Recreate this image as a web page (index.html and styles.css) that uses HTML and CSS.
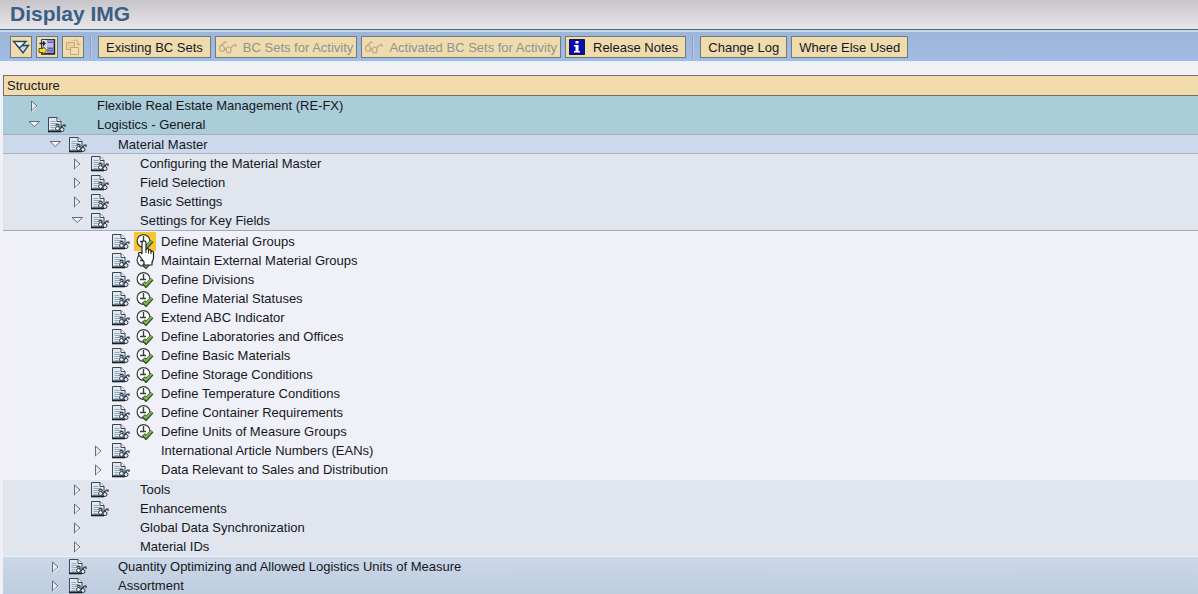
FILE: index.html
```
<!DOCTYPE html>
<html lang="en">
<head>
    <meta charset="UTF-8">
    <meta name="viewport" content="width=device-width, initial-scale=1.0">
    <title>Display IMG</title>
    <link rel="stylesheet" href="styles.css">
</head>
<body>
    <!-- Shared icons -->
    <svg class="sprite" aria-hidden="true">
        <symbol id="closed" viewBox="0 0 16 16">
            <path d="M5.5 3v10l5.5-5z" fill="#e9edf3" stroke="#646b75"/>
            <path d="M6 13.5l5.5-5" stroke="#fff" fill="none"/>
        </symbol>
        <symbol id="open" viewBox="0 0 16 16">
            <path d="M3 4.500h10.500l-5.250 5z" fill="#f3f6fa" stroke="#646b75"/>
        </symbol>
        <symbol id="doc" viewBox="0 0 18 16">
            <path d="M.5.500h8.500l4 4v9.500H.5z" fill="#dfe8f1" stroke="#3a4753"/>
            <path d="M0 14.500h13" stroke="#15202b" stroke-width="1.600"/>
            <path d="M9 .500v4h4" fill="#fff" stroke="#3a4753"/>
            <path d="M2.500 4.500h5M2.500 6.500h8M2.500 8.500h5M2.500 10.500h4M2.500 12.500h4" stroke="#94a8bb"/>
            <path d="M7.500 8.500l1.500-1 2 .5v2M12.500 11l3-3h1.500v2" fill="none" stroke="#26313d" stroke-width="1.200"/>
            <circle cx="9.500" cy="11.500" r="2" fill="#e6edf4" stroke="#26313d"/>
            <circle cx="14" cy="12.500" r="2" fill="#e6edf4" stroke="#26313d"/>
        </symbol>
        <symbol id="run" viewBox="0 0 18 16">
            <circle cx="7.500" cy="7" r="6.400" fill="#fff" stroke="#3a3e3e" stroke-width="1.200"/>
            <path d="M7.500 2v6M4 7.500h6" fill="none" stroke="#3a3e3e" stroke-width="1.400"/>
            <path d="M7.500 10.500l2.500 3 6-6.500" fill="none" stroke="#2f4c24" stroke-width="4"/>
            <path d="M8 11l2 2 5.500-6" fill="none" stroke="#85b556" stroke-width="2.200"/>
        </symbol>
        <symbol id="glasses" viewBox="0 0 20 16">
            <g fill="none" stroke="#b9a98c" stroke-width="1.200">
                <ellipse cx="4" cy="9.500" rx="2.500" ry="3"/>
                <ellipse cx="10.500" cy="11" rx="2.500" ry="3"/>
                <path d="M6.500 9.500l1.500 1M2 7.500l5-4.500 2 .5M12.500 9l4-3.500 1.500.5v2"/>
            </g>
        </symbol>
    </svg>

    <h1>Display IMG</h1>

    <div class="toolbar" role="toolbar">
        <button class="icon-btn" aria-label="Expand subtree">
            <svg width="18" height="18" viewBox="0 0 18 18"><path d="M5 7.500h11.500l-5.500 7.500z" fill="#c4dbf2" stroke="#26405a" stroke-width="1.300"/><path d="M1.500 3.500h12.500l-6.500 6.500z" fill="#fafcff" stroke="#26405a" stroke-width="1.300"/></svg>
        </button>
        <button class="icon-btn" aria-label="Position">
            <svg width="18" height="18" viewBox="0 0 18 18"><path d="M3.500 1.500h13v14h-13z" fill="#d3dbed" stroke="#33394e"/><path d="M9 2h7v13H9z" fill="#8e8fce"/><path d="M10 4.500h5M10 10.500h5M10 12.500h5" stroke="#63649d"/><path d="M9 5h6v4H9z" fill="#b9bce6"/><path d="M1.500 5.500h5M5 3.500l2 2-2 2M16.500 1v15M3 16h14" fill="none" stroke="#1d2437" stroke-width="1.300"/><path d="M1 10.500h4V8.500l4 4-4 4v-2H1z" fill="#f5df24" stroke="#514e16"/></svg>
        </button>
        <button class="icon-btn" aria-label="Copy" disabled>
            <svg width="18" height="18" viewBox="0 0 18 18" fill="#f4deb4" stroke="#c9a877"><path d="M2.500 4.500h8v7h-8z" fill="#f0cf9e"/><path d="M6.500 9.500h8v7h-8z"/><path d="M9 2.500q5-2 5.500 4M12.500 5l2 2.500 2-2.500" fill="none"/></svg>
        </button>
        <span class="separator"></span>
        <button>Existing BC Sets</button>
        <button disabled><svg width="20" height="16"><use href="#glasses"/></svg>BC Sets for Activity</button>
        <button disabled><svg width="20" height="16"><use href="#glasses"/></svg>Activated BC Sets for Activity</button>
        <button class="info"><svg width="16" height="16" viewBox="0 0 16 16"><path d="M.5.500h15v15H.5z" fill="#0b0bb5" stroke="#15152d"/><path d="M6.500 2h3v2.500h-3zM5 6h4.500v6H11v1.500H5V12h1.500V7.500H5z" fill="#fff"/></svg>Release Notes</button>
        <span class="separator"></span>
        <button>Change Log</button>
        <button>Where Else Used</button>
    </div>

    <main>
        <h2>Structure</h2>
        <div class="tree" role="tree">
            <div class="group area">
                <div class="row level-0" role="treeitem"><button class="toggle" aria-label="Expand"><svg><use href="#closed"/></svg></button><span class="doc"></span><span class="label">Flexible Real Estate Management (RE-FX)</span></div>
                <div class="row level-0" role="treeitem"><button class="toggle" aria-label="Collapse"><svg><use href="#open"/></svg></button><button class="doc" aria-label="Documentation"><svg><use href="#doc"/></svg></button><span class="label">Logistics - General</span></div>
            </div>
            <div class="group topic">
                <div class="row level-1" role="treeitem"><button class="toggle" aria-label="Collapse"><svg><use href="#open"/></svg></button><button class="doc" aria-label="Documentation"><svg><use href="#doc"/></svg></button><span class="label">Material Master</span></div>
            </div>
            <div class="group section lined">
                <div class="row level-2" role="treeitem"><button class="toggle" aria-label="Expand"><svg><use href="#closed"/></svg></button><button class="doc" aria-label="Documentation"><svg><use href="#doc"/></svg></button><span class="label">Configuring the Material Master</span></div>
                <div class="row level-2" role="treeitem"><button class="toggle" aria-label="Expand"><svg><use href="#closed"/></svg></button><button class="doc" aria-label="Documentation"><svg><use href="#doc"/></svg></button><span class="label">Field Selection</span></div>
                <div class="row level-2" role="treeitem"><button class="toggle" aria-label="Expand"><svg><use href="#closed"/></svg></button><button class="doc" aria-label="Documentation"><svg><use href="#doc"/></svg></button><span class="label">Basic Settings</span></div>
                <div class="row level-2" role="treeitem"><button class="toggle" aria-label="Collapse"><svg><use href="#open"/></svg></button><button class="doc" aria-label="Documentation"><svg><use href="#doc"/></svg></button><span class="label">Settings for Key Fields</span></div>
            </div>
            <div class="group activities">
                <div class="row level-3" role="treeitem"><span class="toggle"></span><button class="doc" aria-label="Documentation"><svg><use href="#doc"/></svg></button><button class="run active" aria-label="Execute"><svg><use href="#run"/></svg>
                    <svg class="pointer" viewBox="0 0 18 26"><path d="M5 14V3q0-2 2-2t2 2v6q1-1 2.500 0v1q1.500-1 2.500.5v1q2-1 2.500 1v6L15 22v3H7v-3l-5-7q-1-2 .5-2.500T5 14z" fill="#fff" stroke="#222" stroke-width="1.200"/><path d="M9 9v4M11.500 10v3.500M14 11v3" stroke="#222"/></svg>
                </button><span class="label">Define Material Groups</span></div>
                <div class="row level-3" role="treeitem"><span class="toggle"></span><button class="doc" aria-label="Documentation"><svg><use href="#doc"/></svg></button><button class="run" aria-label="Execute"><svg><use href="#run"/></svg></button><span class="label">Maintain External Material Groups</span></div>
                <div class="row level-3" role="treeitem"><span class="toggle"></span><button class="doc" aria-label="Documentation"><svg><use href="#doc"/></svg></button><button class="run" aria-label="Execute"><svg><use href="#run"/></svg></button><span class="label">Define Divisions</span></div>
                <div class="row level-3" role="treeitem"><span class="toggle"></span><button class="doc" aria-label="Documentation"><svg><use href="#doc"/></svg></button><button class="run" aria-label="Execute"><svg><use href="#run"/></svg></button><span class="label">Define Material Statuses</span></div>
                <div class="row level-3" role="treeitem"><span class="toggle"></span><button class="doc" aria-label="Documentation"><svg><use href="#doc"/></svg></button><button class="run" aria-label="Execute"><svg><use href="#run"/></svg></button><span class="label">Extend ABC Indicator</span></div>
                <div class="row level-3" role="treeitem"><span class="toggle"></span><button class="doc" aria-label="Documentation"><svg><use href="#doc"/></svg></button><button class="run" aria-label="Execute"><svg><use href="#run"/></svg></button><span class="label">Define Laboratories and Offices</span></div>
                <div class="row level-3" role="treeitem"><span class="toggle"></span><button class="doc" aria-label="Documentation"><svg><use href="#doc"/></svg></button><button class="run" aria-label="Execute"><svg><use href="#run"/></svg></button><span class="label">Define Basic Materials</span></div>
                <div class="row level-3" role="treeitem"><span class="toggle"></span><button class="doc" aria-label="Documentation"><svg><use href="#doc"/></svg></button><button class="run" aria-label="Execute"><svg><use href="#run"/></svg></button><span class="label">Define Storage Conditions</span></div>
                <div class="row level-3" role="treeitem"><span class="toggle"></span><button class="doc" aria-label="Documentation"><svg><use href="#doc"/></svg></button><button class="run" aria-label="Execute"><svg><use href="#run"/></svg></button><span class="label">Define Temperature Conditions</span></div>
                <div class="row level-3" role="treeitem"><span class="toggle"></span><button class="doc" aria-label="Documentation"><svg><use href="#doc"/></svg></button><button class="run" aria-label="Execute"><svg><use href="#run"/></svg></button><span class="label">Define Container Requirements</span></div>
                <div class="row level-3" role="treeitem"><span class="toggle"></span><button class="doc" aria-label="Documentation"><svg><use href="#doc"/></svg></button><button class="run" aria-label="Execute"><svg><use href="#run"/></svg></button><span class="label">Define Units of Measure Groups</span></div>
                <div class="row level-3" role="treeitem"><button class="toggle" aria-label="Expand"><svg><use href="#closed"/></svg></button><button class="doc" aria-label="Documentation"><svg><use href="#doc"/></svg></button><span class="label">International Article Numbers (EANs)</span></div>
                <div class="row level-3" role="treeitem"><button class="toggle" aria-label="Expand"><svg><use href="#closed"/></svg></button><button class="doc" aria-label="Documentation"><svg><use href="#doc"/></svg></button><span class="label">Data Relevant to Sales and Distribution</span></div>
            </div>
            <div class="group section">
                <div class="row level-2" role="treeitem"><button class="toggle" aria-label="Expand"><svg><use href="#closed"/></svg></button><button class="doc" aria-label="Documentation"><svg><use href="#doc"/></svg></button><span class="label">Tools</span></div>
                <div class="row level-2" role="treeitem"><button class="toggle" aria-label="Expand"><svg><use href="#closed"/></svg></button><button class="doc" aria-label="Documentation"><svg><use href="#doc"/></svg></button><span class="label">Enhancements</span></div>
                <div class="row level-2" role="treeitem"><button class="toggle" aria-label="Expand"><svg><use href="#closed"/></svg></button><span class="doc"></span><span class="label">Global Data Synchronization</span></div>
                <div class="row level-2" role="treeitem"><button class="toggle" aria-label="Expand"><svg><use href="#closed"/></svg></button><span class="doc"></span><span class="label">Material IDs</span></div>
            </div>
            <div class="group last">
                <div class="row level-1" role="treeitem"><button class="toggle" aria-label="Expand"><svg><use href="#closed"/></svg></button><button class="doc" aria-label="Documentation"><svg><use href="#doc"/></svg></button><span class="label">Quantity Optimizing and Allowed Logistics Units of Measure</span></div>
                <div class="row level-1" role="treeitem"><button class="toggle" aria-label="Expand"><svg><use href="#closed"/></svg></button><button class="doc" aria-label="Documentation"><svg><use href="#doc"/></svg></button><span class="label">Assortment</span></div>
            </div>
        </div>
    </main>
</body>
</html>
```
FILE: styles.css
```
* {
    box-sizing: border-box;
}

body {
    margin: 0;
    height: 100vh;
    display: flex;
    flex-direction: column;
    overflow: hidden;
    background: #f1f0f6;
    color: #15171c;
    font-family: "Liberation Sans", Arial, sans-serif;
    font-size: 13px;
}

.sprite {
    display: none;
}

h1 {
    flex: none;
    margin: 0;
    padding: 0 10px 2px;
    background: linear-gradient(#c7c5ca, #e9e7e9);
    border-bottom: 1px solid #4f6a7b;
    color: #3a5f85;
    font-size: 21px;
    line-height: 27px;
}

button {
    margin: 0;
    padding: 0;
    border: none;
    background: none;
    font: inherit;
    color: inherit;
}

/* Toolbar */
.toolbar {
    flex: none;
    display: flex;
    align-items: center;
    gap: 4px;
    padding: 4px 10px 3px;
    background: linear-gradient(#9db5d8, #a1bce5);
    border-top: 2px solid #c3daeb;
    border-bottom: 2px solid #e9f2fb;
}

.toolbar button {
    display: flex;
    align-items: center;
    gap: 8px;
    height: 22px;
    padding: 0 7px;
    background: #f0dbae;
    border: 1px solid #6e7b78;
    white-space: nowrap;
}

.toolbar button:disabled {
    padding: 0 3px 0 2px;
    gap: 5px;
    color: #8c9590;
}

.toolbar .icon-btn,
.toolbar .icon-btn:disabled {
    justify-content: center;
    width: 22px;
    padding: 0;
}

.toolbar .info {
    padding-left: 3px;
}

.separator {
    width: 2px;
    height: 22px;
    margin: 0 2px;
    background: #8e9fb9;
    border-right: 1px solid #b9cbe5;
}

/* Tree */
main {
    flex: 1;
    min-height: 0;
    margin-top: 12px;
    padding-left: 3px;
    overflow: hidden;
}

h2 {
    margin: 0;
    padding: 0 3px;
    background: #f2dcae;
    border: 1px solid #70706c;
    border-right: none;
    font-size: 13px;
    font-weight: normal;
    line-height: 19px;
}

.area {
    background: #abccd9;
    border-bottom: 1px solid #9fb0bb;
}

.topic {
    background: #ccd9ec;
    box-shadow: inset 0 -1px #a9b3c1;
}

.section {
    background: #e0e5ee;
    border-bottom: 1px solid #eaf0f6;
}

.lined {
    border-bottom-color: #a4abb6;
}

.activities {
    padding: 1px 0;
    background: #f0f1f8;
}

.last {
    background: linear-gradient(#cbd8e8, #bdccdf);
}

.row {
    display: flex;
    align-items: center;
    height: 19px;
}

.level-0 { padding-left: 23px; }
.level-1 { padding-left: 44px; }
.level-2 { padding-left: 66px; }
.level-3 { padding-left: 87px; }

.toggle,
.doc,
.run {
    flex: none;
    display: flex;
    align-items: center;
    height: 19px;
}

.toggle {
    width: 22px;
}

.toggle svg {
    width: 16px;
    height: 16px;
}

.doc {
    width: 22px;
}

.doc svg,
.run svg {
    width: 18px;
    height: 16px;
}

.run {
    position: relative;
    justify-content: center;
    width: 22px;
}

.run.active {
    background: #f8c52d;
}

.run .pointer {
    position: absolute;
    left: 3px;
    top: 8px;
    z-index: 1;
    width: 18px;
    height: 26px;
}

.label {
    margin-left: 27px;
    white-space: nowrap;
}

.run + .label {
    margin-left: 5px;
}
```
